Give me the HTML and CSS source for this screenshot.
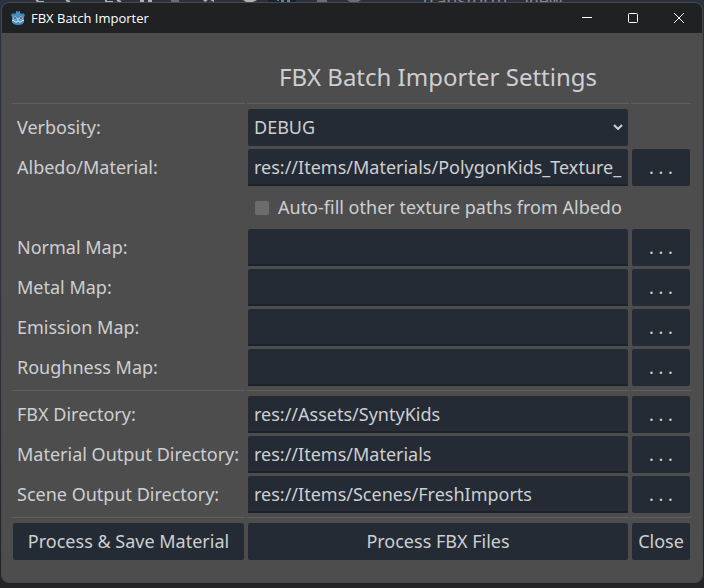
FILE: index.html
```html
<!DOCTYPE html>
<html lang="en">
<head>
    <meta charset="UTF-8">
    <meta name="viewport" content="width=device-width, initial-scale=1.0">
    <title>FBX Batch Importer</title>
    <link rel="stylesheet" href="styles.css">
</head>
<body>
    <!-- Editor toolbar behind the window -->
    <div class="editor-bar">
        <svg class="editor-icons" width="404" height="3" viewBox="0 0 404 3" aria-hidden="true">
            <path d="M36 0l3 2h5M66 0l4 2M106 0v2h7M117 0l4 2" fill="none" stroke="#aeb0b4" stroke-width="2"/>
            <path d="M140 0h4v2h-4zM148 0h4v2h-4zM203 0h5l-3 2zM210 0h4v2zM243 0h14l-4 2h-7z" fill="#aeb0b4"/>
            <path d="M171 0h8v2h-8zM317 0h10v2h-10zM347 0h14l-3 2h-8z" fill="#6a6e76"/>
            <path d="M268 0h28v2h-28z" fill="#1c222b"/>
            <path d="M277 0h2v1h-2zM281 0h3v2h-3zM287 0h3v2h-3z" fill="#4d8aa6"/>
        </svg>
        <span>Transform</span>
        <span>View</span>
    </div>

    <div class="window">
        <header class="titlebar">
            <svg class="logo" width="14" height="14" viewBox="0 0 14 14" aria-hidden="true">
                <path d="M0 4l2-2 1 1 2-1V0h1l1 1 1-1h1v2l2 1 1-1 2 2-1 2v5q-1 3-6 3t-6-3V6z" fill="#478cbf"/>
                <path d="M1 9.5h2l1 1.5h2v-1h2v1h2l1-1.5h2" fill="none" stroke="#dbe8f2"/>
                <circle cx="4" cy="7" r="1.6" fill="#e8eff5"/>
                <circle cx="10" cy="7" r="1.6" fill="#e8eff5"/>
                <circle cx="4" cy="7" r="1" fill="#414042"/>
                <circle cx="10" cy="7" r="1" fill="#414042"/>
                <path d="M6.5 7h1v2h-1z" fill="#e8eff5"/>
            </svg>
            <span class="title">FBX Batch Importer</span>
            <button class="win-btn" type="button" aria-label="Minimize">
                <svg width="10" height="10" viewBox="0 0 10 10"><path d="M0 4.5h10"/></svg>
            </button>
            <button class="win-btn" type="button" aria-label="Maximize">
                <svg width="10" height="10" viewBox="0 0 10 10"><rect x="0.5" y="0.5" width="9" height="9" rx="1"/></svg>
            </button>
            <button class="win-btn" type="button" aria-label="Close window">
                <svg width="10" height="10" viewBox="0 0 10 10"><path d="M0 0l10 10M10 0L0 10"/></svg>
            </button>
        </header>

        <form class="settings">
            <h1>FBX Batch Importer Settings</h1>

            <hr><hr><hr>

            <label class="name" for="verbosity">Verbosity:</label>
            <div class="select">
                <select id="verbosity">
                    <option>DEBUG</option>
                </select>
                <svg width="10" height="6" viewBox="0 0 10 6" aria-hidden="true"><path d="M1 1l4 4 4-4"/></svg>
            </div>

            <label class="name" for="albedo">Albedo/Material:</label>
            <input type="text" id="albedo" value="res://Items/Materials/PolygonKids_Texture_">
            <button type="button">. . .</button>

            <label class="check"><input type="checkbox"> Auto-fill other texture paths from Albedo</label>

            <label class="name" for="normal">Normal Map:</label>
            <input type="text" id="normal">
            <button type="button">. . .</button>

            <label class="name" for="metal">Metal Map:</label>
            <input type="text" id="metal">
            <button type="button">. . .</button>

            <label class="name" for="emission">Emission Map:</label>
            <input type="text" id="emission">
            <button type="button">. . .</button>

            <label class="name" for="roughness">Roughness Map:</label>
            <input type="text" id="roughness">
            <button type="button">. . .</button>

            <hr><hr><hr>

            <label class="name" for="fbxDir">FBX Directory:</label>
            <input type="text" id="fbxDir" value="res://Assets/SyntyKids">
            <button type="button">. . .</button>

            <label class="name" for="materialDir">Material Output Directory:</label>
            <input type="text" id="materialDir" value="res://Items/Materials">
            <button type="button">. . .</button>

            <label class="name" for="sceneDir">Scene Output Directory:</label>
            <input type="text" id="sceneDir" value="res://Items/Scenes/FreshImports">
            <button type="button">. . .</button>

            <hr><hr><hr>

            <button type="button">Process &amp; Save Material</button>
            <button type="button">Process FBX Files</button>
            <button type="button">Close</button>
        </form>
    </div>
</body>
</html>
```
FILE: styles.css
```css
* {
    box-sizing: border-box;
}

body {
    margin: 0;
    padding: 2px 1px 4px;
    min-height: 100vh;
    background: linear-gradient(#2a303d, #33333b 50%, #232328);
    font-family: "Noto Sans", sans-serif;
    font-size: 18px;
    color: #cdcfd2;
    overflow: hidden;
}

/* Editor toolbar, mostly covered by the window */
.editor-bar {
    position: absolute;
    top: 0;
    left: 0;
    right: 0;
    height: 3px;
    display: flex;
    align-items: flex-end;
    gap: 16px;
    overflow: hidden;
    line-height: 6px;
    color: #85888f;
}

.editor-icons {
    flex: none;
}

/* Window */
.window {
    position: relative;
    background: #4d4d4d;
    border: 1px solid #47494c;
    border-radius: 8px;
    overflow: hidden;
}

.titlebar {
    display: flex;
    align-items: center;
    height: 30px;
    padding-left: 9px;
    background: #202122;
    color: #fff;
}

.title {
    flex: 1;
    margin-left: 6px;
    font-family: "Open Sans", sans-serif;
    font-size: 13px;
}

/* Settings grid */
.settings {
    display: grid;
    grid-template-columns: 231px 1fr 58px;
    gap: 3px 4px;
    padding: 26px 12px 22px 11px;
}

h1 {
    grid-column: 1 / -1;
    margin: 0 62px 4px 235px;
    font-size: 24px;
    font-weight: 400;
    line-height: 36px;
    text-align: center;
    white-space: nowrap;
}

hr {
    height: 1px;
    margin: 1px -1px 2px;
    border: none;
    background: #5f5f5f;
}

.name {
    grid-column: 1;
    padding-left: 4px;
    line-height: 37px;
    white-space: nowrap;
}

button,
select,
input[type="text"] {
    width: 100%;
    min-width: 0;
    height: 37px;
    border: none;
    border-radius: 2px;
    background: #252b34;
    color: inherit;
    font: inherit;
    white-space: nowrap;
}

button {
    padding: 0 0 2px;
}

input[type="text"] {
    padding: 0 6px;
    border-bottom: 2px solid #1e232a;
    border-radius: 2px 2px 0 0;
}

.select {
    position: relative;
}

select {
    display: block;
    padding: 0 6px 2px;
    appearance: none;
}

.select svg {
    position: absolute;
    top: 15px;
    right: 5px;
    fill: none;
    stroke: #cdcfd2;
    stroke-width: 2;
    pointer-events: none;
}

.check {
    grid-column: 2;
    display: flex;
    align-items: center;
    gap: 9px;
    height: 37px;
    padding-left: 7px;
    line-height: 37px;
    white-space: nowrap;
}

.check input {
    appearance: none;
    width: 14px;
    height: 14px;
    margin: 0;
    border-radius: 2px;
    background: #6c6c6c;
}

.check input:checked {
    background: #478cbf;
}

.win-btn {
    width: 46px;
    height: 30px;
    padding: 0;
    background: none;
}

.win-btn svg {
    display: block;
    margin: 0 auto;
    fill: none;
    stroke: #fff;
}
```
